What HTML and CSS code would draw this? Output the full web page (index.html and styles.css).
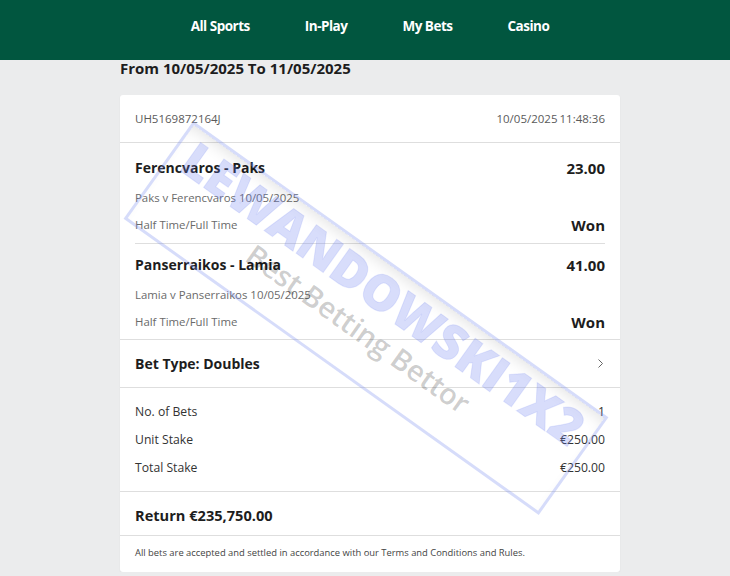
FILE: index.html
```html
<!DOCTYPE html>
<html lang="en">
  <head>
    <title>My Bets</title>
    <meta charset="utf-8">
    <link rel="stylesheet" href="styles.css">
  </head>
  <body>

    <header class="topbar">
      <nav class="nav">
        <a href="#">All Sports</a>
        <a href="#">In-Play</a>
        <a href="#">My Bets</a>
        <a href="#">Casino</a>
      </nav>
    </header>

    <main class="page">
      <h1 class="range">From 10/05/2025 To 11/05/2025</h1>

      <section class="slip">
        <div class="slip-head">
          <span>UH5169872164J</span>
          <span>10/05/2025<span class="clock">11:48:36</span></span>
        </div>

        <div class="legs">
          <div class="leg">
            <div class="row leg-top">
              <span class="leg-title">Ferencvaros - Paks</span>
              <span class="big">23.00</span>
            </div>
            <div class="leg-sub">Paks v Ferencvaros 10/05/2025</div>
            <div class="row market">
              <span>Half Time/Full Time</span>
              <span class="big">Won</span>
            </div>
          </div>
          <div class="leg">
            <div class="row leg-top">
              <span class="leg-title">Panserraikos - Lamia</span>
              <span class="big">41.00</span>
            </div>
            <div class="leg-sub">Lamia v Panserraikos 10/05/2025</div>
            <div class="row market">
              <span>Half Time/Full Time</span>
              <span class="big">Won</span>
            </div>
          </div>
        </div>

        <div class="row bet-type">
          <span class="leg-title">Bet Type: Doubles</span>
          <svg class="chevron" width="7" height="11" viewBox="0 0 7 11">
            <path d="M1.5 1.5 L5.5 5.5 L1.5 9.5" fill="none" stroke="#666" stroke-width="1"/>
          </svg>
        </div>

        <div class="stakes">
          <div class="row"><span>No. of Bets</span><span>1</span></div>
          <div class="row"><span>Unit Stake</span><span>&euro;250.00</span></div>
          <div class="row"><span>Total Stake</span><span>&euro;250.00</span></div>
        </div>

        <div class="return">Return &euro;235,750.00</div>

        <div class="terms">All bets are accepted and settled in accordance with our Terms and Conditions and Rules.</div>
      </section>
    </main>

    <!-- watermark laid over the slip -->
    <div class="stamp">
      <div class="stamp-name">LEWANDOWSKI1X2</div>
      <div class="stamp-line">Best Betting Bettor</div>
    </div>

  </body>
</html>
```

FILE: styles.css
```css
body {
  margin: 0;
  background: #ebeced;
  color: #1d1d1d;
  font-family: "Open Sans", "Noto Sans", sans-serif;
}

.topbar {
  height: 60px;
  background: #01563f;
}

.nav {
  display: flex;
  justify-content: center;
  gap: 55px;
  padding: 17px 0 0 10px;
}

.nav a {
  color: #fff;
  font-size: 13.5px;
  font-weight: 700;
  letter-spacing: -0.5px;
  line-height: 18px;
  text-decoration: none;
}

.page {
  width: 500px;
  margin-left: 120px;
}

.range {
  margin: -1px 0 18px;
  font-size: 15px;
  font-weight: 700;
  line-height: 18px;
}

.slip {
  background: #fff;
  border-radius: 3px;
  box-shadow: 0 1px 2px rgba(0,0,0,0.06);
}

.row {
  display: flex;
  justify-content: space-between;
  align-items: center;
}

.slip-head {
  display: flex;
  justify-content: space-between;
  align-items: center;
  height: 47px;
  padding: 0 15px;
  border-bottom: 1px solid #dedede;
  font-size: 11.5px;
  color: #5a5a5a;
}

.clock {
  margin-left: 2px;
}

.legs {
  padding: 0 15px;
  border-bottom: 1px solid #dedede;
}

.leg {
  padding: 15px 0 4px;
}

.leg + .leg {
  border-top: 1px solid #dedede;
  padding: 11px 0 3px;
}

.leg-top {
  margin-bottom: 7px;
}

.leg-title {
  font-size: 14px;
  font-weight: 700;
  line-height: 20px;
}

.big {
  font-size: 15px;
  font-weight: 700;
  line-height: 20px;
}

.leg-sub {
  font-size: 11.4px;
  line-height: 26px;
  color: #6a6a6a;
}

.market {
  font-size: 11.4px;
  line-height: 28px;
  color: #6a6a6a;
}

.market .big {
  color: #1d1d1d;
}

.bet-type {
  height: 47px;
  padding: 0 15px;
  border-bottom: 1px solid #dedede;
}

.chevron {
  margin-right: 1px;
}

.stakes {
  padding: 10px 15px 9px;
  border-bottom: 1px solid #dedede;
  font-size: 12.2px;
  line-height: 28px;
  color: #333;
}

.return {
  padding: 13px 15px 10px;
  border-bottom: 1px solid #dedede;
  font-size: 14.6px;
  font-weight: 700;
  line-height: 20px;
}

.terms {
  padding: 10px 15px 12px;
  font-size: 9.4px;
  line-height: 14px;
  color: #444;
}

.stamp {
  position: absolute;
  left: 111px;
  top: 258px;
  box-sizing: border-box;
  width: 510px;
  height: 120px;
  border: 3px solid rgba(120,140,240,0.3);
  box-shadow: inset 0 12px 16px -10px rgba(0,0,0,0.12);
  transform: rotate(35.5deg);
  display: flex;
  flex-direction: column;
  align-items: center;
  pointer-events: none;
}

.stamp-name {
  margin-top: 0;
  font-size: 49px;
  font-weight: 800;
  line-height: 52px;
  color: rgba(110,130,240,0.27);
  -webkit-text-stroke: 1px rgba(110,130,240,0.15);
}

.stamp-line {
  margin-top: 0;
  font-size: 29px;
  line-height: 36px;
  font-weight: 600;
  color: rgba(0,0,0,0.2);
}
```
